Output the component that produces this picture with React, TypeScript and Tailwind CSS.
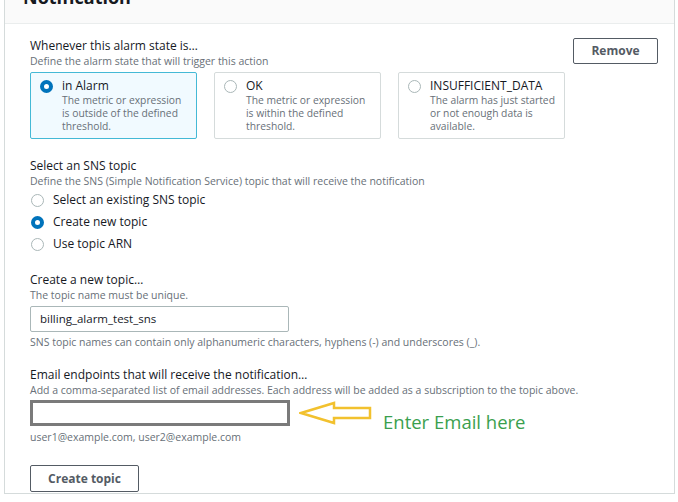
import React from "react";

const font = { fontFamily: '"Open Sans", Arial, sans-serif' };

function Radio({ checked }: { checked?: boolean }) {
  return checked ? (
    <span className="inline-block h-[13px] w-[13px] shrink-0 rounded-full border-[4px] border-[#0073bb] bg-white" />
  ) : (
    <span className="inline-block h-[13px] w-[13px] shrink-0 rounded-full border border-[#aab7b8] bg-white" />
  );
}

interface StateCardProps {
  title: string;
  lines: string[];
  checked?: boolean;
}

function StateCard({ title, lines, checked }: StateCardProps) {
  return (
    <div
      className={
        checked
          ? "w-[167px] h-[67px] rounded-[2px] border border-[#44b9d6] bg-[#f1faff] pl-[9px] pt-[5px]"
          : "w-[167px] h-[67px] rounded-[2px] border border-[#d5dbdb] bg-white pl-[9px] pt-[5px]"
      }
    >
      <div className="flex items-center gap-[9px]">
        <Radio checked={checked} />
        <span className="text-[12px] leading-[16px] text-[#16191f]">{title}</span>
      </div>
      <div className="pl-[22px] text-[10.3px] leading-[13px] text-[#687078]">
        {lines.map((l) => (
          <div key={l}>{l}</div>
        ))}
      </div>
    </div>
  );
}

function ArrowLeft() {
  return (
    <svg width="74" height="24" viewBox="0 0 74 24" className="shrink-0">
      <path
        d="M2 12 L35 2 L35 7 L71 7 L71 17 L35 17 L35 22 Z"
        fill="none"
        stroke="#f2c12e"
        strokeWidth="2.5"
        strokeLinejoin="miter"
      />
    </svg>
  );
}

export default function App() {
  return (
    <div className="h-[502px] w-[678px] overflow-hidden bg-white" style={font}>
      <div className="-mt-[14px] ml-[4px] w-[671px] h-[508px] border-x border-b border-[#d5dbdb]">
        <div className="h-[38px] bg-[#fafafa] border-b border-[#eaeded] pl-[18px]">
          <h2 className="text-[18px] leading-[22px] font-bold text-[#16191f]">Notification</h2>
        </div>

        <div className="pl-[25px] pr-[16px] pt-[14px]">
          <div className="flex justify-between">
            <div>
              <div className="text-[12px] leading-[16px] text-[#16191f]">Whenever this alarm state is…</div>
              <div className="text-[10.5px] leading-[14px] text-[#687078]">
                Define the alarm state that will trigger this action
              </div>
            </div>
            <button className="h-[26px] w-[85px] rounded-[2px] border border-[#545b64] text-[12px] font-bold text-[#545b64] bg-white">
              Remove
            </button>
          </div>

          <div className="mt-[4px] flex gap-[17px]">
            <StateCard
              checked
              title="in Alarm"
              lines={["The metric or expression", "is outside of the defined", "threshold."]}
            />
            <StateCard
              title="OK"
              lines={["The metric or expression", "is within the defined", "threshold."]}
            />
            <StateCard
              title="INSUFFICIENT_DATA"
              lines={["The alarm has just started", "or not enough data is", "available."]}
            />
          </div>

          <div className="mt-[19px] text-[12px] leading-[16px] text-[#16191f]">Select an SNS topic</div>
          <div className="text-[10.5px] leading-[14px] text-[#687078]">
            Define the SNS (Simple Notification Service) topic that will receive the notification
          </div>
          <div className="mt-[4px] flex flex-col gap-[6px]">
            {[
              ["Select an existing SNS topic", false],
              ["Create new topic", true],
              ["Use topic ARN", false],
            ].map(([label, checked]) => (
              <label key={label as string} className="flex items-center gap-[9px] pl-[1px] h-[16px]">
                <Radio checked={checked as boolean} />
                <span className="text-[12px] leading-[16px] text-[#16191f]">{label}</span>
              </label>
            ))}
          </div>

          <div className="mt-[20px] text-[12px] leading-[16px] text-[#16191f]">Create a new topic…</div>
          <div className="text-[10.5px] leading-[14px] text-[#687078]">The topic name must be unique.</div>
          <div className="mt-[4px] flex h-[26px] w-[259px] items-center rounded-[2px] border border-[#aab7b8] px-[9px] text-[11.5px] text-[#16191f]">
            billing_alarm_test_sns
          </div>
          <div className="mt-[3px] text-[10.5px] leading-[14px] text-[#687078]">
            SNS topic names can contain only alphanumeric characters, hyphens (-) and underscores (_).
          </div>

          <div className="mt-[18px] text-[12px] leading-[16px] text-[#16191f]">
            Email endpoints that will receive the notification…
          </div>
          <div className="text-[10.5px] leading-[14px] text-[#687078]">
            Add a comma-separated list of email addresses. Each address will be added as a subscription to the topic above.
          </div>
          <div className="mt-[3px] flex h-[26px] items-start">
            <div className="h-[26px] w-[260px] border-[3px] border-[#7a7a7a] bg-white" />
            <div className="ml-[9px] mt-[1px]">
              <ArrowLeft />
            </div>
            <div className="ml-[10px] mt-[11px] text-[18.5px] leading-[22px] text-[#3a9f4e]">Enter Email here</div>
          </div>
          <div className="mt-[4px] text-[10.5px] leading-[14px] text-[#687078]">
            user1@example.com, user2@example.com
          </div>

          <button className="mt-[21px] h-[27px] w-[109px] rounded-[2px] border border-[#545b64] text-[12px] font-bold text-[#545b64] bg-white">
            Create topic
          </button>
        </div>
      </div>
    </div>
  );
}
